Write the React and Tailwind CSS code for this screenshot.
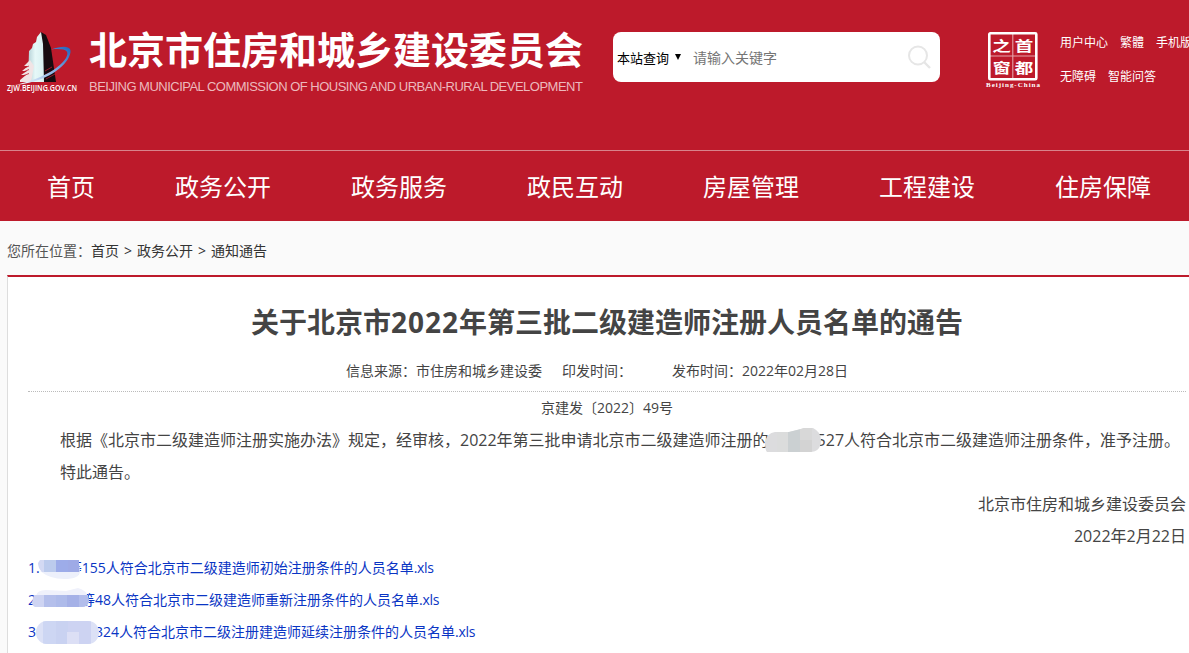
import React, { useState } from 'react';

const navItems = ['首页', '政务公开', '政务服务', '政民互动', '房屋管理', '工程建设', '住房保障'];

const topLinks = [
  ['用户中心', '繁體', '手机版'],
  ['无障碍', '智能问答'],
];

const SiteLogo = () => (
  <svg width="72" height="66" viewBox="0 0 72 66" className="block shrink-0 overflow-visible">
    <defs>
      <linearGradient id="tower" x1="0" y1="0" x2="1" y2="0">
        <stop offset="0" stopColor="#b4d0d6" />
        <stop offset="0.45" stopColor="#e6f8f8" />
        <stop offset="1" stopColor="#d8f0f1" />
      </linearGradient>
      <linearGradient id="orbit" x1="0" y1="1" x2="1" y2="0">
        <stop offset="0" stopColor="#ffffff" />
        <stop offset="0.5" stopColor="#8fb7e6" />
        <stop offset="1" stopColor="#1c62c0" />
      </linearGradient>
    </defs>
    {/* tower */}
    <path d="M34 2 L39 5 L44 18 L49 52 L35 52 Z" fill="#160c10" />
    <path d="M34 2 L30 7 L29 12 L26 14 L25 18 L22 21 L21 52 L37 52 L36 14 Z" fill="url(#tower)" />
    <path d="M23 30 L17 36 L21 36 L15 41 L20 41 L14 45 L19 45 L13 50 L13 52 L24 52 L27 36 Z" fill="#f1e4e5" />
    <path d="M16 38.5 L22 36 M15 42.5 L22 39.5 M14 46.5 L22 43.5" stroke="#bd1a2b" strokeWidth="0.8" />
    <path d="M38 41 L45 37 M38 45 L47 40.5 M39 49 L48 44" stroke="#a31b2a" strokeWidth="0.9" />
    {/* orbit swoosh */}
    <path
      d="M8 55 C26 51 50 42 59 28 C63 21 59 18 44 19.5 C60 14 67 17 62 27 C56 40 34 53 8 55 Z"
      fill="url(#orbit)"
    />
    <text
      x="0"
      y="61.3"
      textLength="70"
      lengthAdjust="spacingAndGlyphs"
      fontSize="8.5"
      fontWeight="600"
      fill="#fff"
      fontFamily="'Open Sans', 'Liberation Sans', sans-serif"
    >
      ZJW.BEIJING.GOV.CN
    </text>
  </svg>
);

const CapitalSeal = () => (
  <svg width="56" height="60" viewBox="0 0 56 60" className="block shrink-0">
    <rect x="4.3" y="3.3" width="47" height="46" rx="1" fill="none" stroke="#fff" strokeWidth="2.6" />
    <path d="M27.8 4 V48 M5 26 H50" stroke="#fff" strokeOpacity="0.6" strokeWidth="1.1" />
    <g
      fill="#fff"
      fontSize="16"
      fontWeight="600"
      textAnchor="middle"
      fontFamily="'Noto Sans CJK SC', sans-serif"
    >
      <text transform="translate(16.6 20.6) scale(1.16 0.86)">之</text>
      <text transform="translate(39 20.6) scale(1.16 0.86)">首</text>
      <text transform="translate(16.6 42.8) scale(1.12 0.86)">窗</text>
      <text transform="translate(39 42.8) scale(1.16 0.86)">都</text>
    </g>
    <text
      x="1"
      y="57"
      textLength="54"
      fontSize="7"
      fontWeight="700"
      fill="#fff"
      fontFamily="'Liberation Serif', serif"
    >
      Beijing-China
    </text>
  </svg>
);

const SearchBox = () => {
  const [keyword, setKeyword] = useState('');

  return (
    <div className="mt-8 ml-[30px] flex h-[50px] w-[327px] shrink-0 items-center rounded-lg bg-white pt-px pl-1">
      <button className="flex w-[76px] items-center text-[13px] leading-5 text-black">
        本站查询
        <svg width="6" height="6" viewBox="0 0 6 6" className="mb-[2px] ml-[6px]">
          <path d="M0 0 H6 L3 6 Z" fill="#000" />
        </svg>
      </button>
      <input
        value={keyword}
        onChange={(e) => setKeyword(e.target.value)}
        placeholder="请输入关键字"
        className="w-[210px] text-sm text-black outline-none placeholder:text-[#757575]"
      />
      <svg width="24" height="24" viewBox="0 0 24 24" fill="none" stroke="#e6e6e6" strokeWidth="2" className="mb-px ml-[4px]">
        <circle cx="11" cy="10.5" r="9" />
        <path d="M17 17 L23 23" strokeWidth="2.4" />
      </svg>
    </div>
  );
};

const Header = () => (
  <header className="bg-[#bd1a2b] text-white">
    <div className="flex h-[150px] items-start">
      <div className="mt-[30px] ml-[7px]">
        <SiteLogo />
      </div>
      <div className="mt-[28px] ml-[10px] w-[494px] shrink-0 whitespace-nowrap">
        <h1 className="h-[44px] text-[38px] leading-[42px] font-bold">北京市住房和城乡建设委员会</h1>
        <p className="mt-[6px] font-['Liberation_Sans',sans-serif] text-[13px] leading-[18px] tracking-[-0.51px] text-[#ecb9bd]">
          BEIJING MUNICIPAL COMMISSION OF HOUSING AND URBAN-RURAL DEVELOPMENT
        </p>
      </div>
      <SearchBox />
      <div className="mt-[30px] ml-[45px]">
        <CapitalSeal />
      </div>
      <div className="mt-[26px] ml-[19px] shrink-0 text-xs leading-[34px] whitespace-nowrap">
        {topLinks.map((row, i) => (
          <div key={i} className="flex gap-3">
            {row.map((label) => (
              <a key={label} href="#">{label}</a>
            ))}
          </div>
        ))}
      </div>
    </div>
    <nav className="flex h-[71px] border-t border-[#d8838b] pl-[7px] text-2xl leading-[72px] whitespace-nowrap">
      {navItems.map((label) => (
        <a key={label} href="#" className="shrink-0 px-10">{label}</a>
      ))}
    </nav>
  </header>
);

// Blurred-out names inside the notice text
const BodyMask = () => (
  <span className="relative inline-block h-4 w-12">
    <svg width="56" height="24" viewBox="0 0 56 24" className="absolute -top-[2px] -left-[4px] max-w-none">
      <clipPath id="mask-body">
        <path d="M10 4 L24 4 L40 0 L48 0 Q56 4 56 12 Q56 24 45 24 L2 24 Q0 22 0 14 Q2 5 10 4 Z" />
      </clipPath>
      <g clipPath="url(#mask-body)">
        <rect width="56" height="24" fill="#dcdcde" />
        <rect x="12" width="11" height="24" fill="#dbdcdc" />
        <rect x="23" width="12" height="24" fill="#cbd0d2" />
        <rect x="35" width="12" height="24" fill="#d3d3d3" />
        <rect x="35" width="12" height="12" fill="#d8d8d8" />
      </g>
    </svg>
  </span>
);

const FirstMask = () => (
  <span className="relative inline-block h-4 w-[28px]">
    <svg width="44" height="20" viewBox="0 0 44 20" className="absolute top-[3px] -left-[2px] max-w-none">
      <path d="M2 11 Q12 19 26 19 Q42 19 42 11 Z" fill="#edf0fb" />
      <path d="M2 0 H40 Q42 6 42 12 H4 Q0 8 0 3 Z" fill="#d3d9f3" />
      <rect x="6" width="12" height="12" fill="#bccbed" />
      <rect x="18" width="12" height="12" fill="#9dace9" />
      <rect x="30" width="11" height="12" fill="#9eaae6" />
    </svg>
  </span>
);

const SecondMask = () => (
  <span className="relative inline-block h-4 w-[45px]">
    <svg width="58" height="20" viewBox="0 0 58 20" className="absolute -top-px -left-[4px] max-w-none">
      <path d="M4 8 Q5 2 14 2 L34 3 L46 0 Q55 2 56 10 Z" fill="#eff1fb" />
      <path d="M2 7 H55 Q57 10 57 14 Q55 19 50 19 H3 Q0 18 0 14 Z" fill="#ced4f2" />
      <rect x="12" y="7" width="12" height="12" fill="#b4bfeb" />
      <rect x="24" y="7" width="11" height="12" fill="#aebbea" />
      <rect x="35" y="7" width="12" height="12" fill="#a5b1e7" />
      <path d="M47 7 H55 Q57 10 57 14 Q55 19 50 19 H47 Z" fill="#b2bdeb" />
    </svg>
  </span>
);

const ThirdMask = () => (
  <span className="relative inline-block h-4 w-[59px]">
    <svg width="64" height="23" viewBox="0 0 64 23" className="absolute top-0 left-0 max-w-none">
      <clipPath id="mask-third">
        <rect width="63" height="23" rx="11" />
      </clipPath>
      <g clipPath="url(#mask-third)">
        <rect width="63" height="23" fill="#dce1f6" />
        <rect x="7" width="13" height="23" fill="#cdd6f3" />
        <rect x="20" width="12" height="23" fill="#c9d2f1" />
        <rect x="32" width="23" height="23" fill="#cdd3f2" />
        <rect x="31" y="11" width="12" height="12" fill="#dcdff5" />
      </g>
    </svg>
  </span>
);

const attachments = [
  { no: '1.', Mask: FirstMask, text: '等155人符合北京市二级建造师初始注册条件的人员名单' },
  { no: '2', Mask: SecondMask, text: '等48人符合北京市二级建造师重新注册条件的人员名单' },
  { no: '3', Mask: ThirdMask, text: '324人符合北京市二级注册建造师延续注册条件的人员名单' },
];

const Article = () => (
  <main className="ml-[7px] h-[378px] border-t-2 border-l border-t-[#bd1a2b] border-l-[#dddddd] bg-white pr-[3px] pl-5 text-[#444444]">
    <h2 className="h-[74px] pt-[24px] text-center text-[28px] leading-[42px] font-bold whitespace-nowrap">
      关于北京市<span className="tracking-[1px]">2022</span>年第三批二级建造师注册人员名单的通告
    </h2>
    <div className="flex h-[41px] justify-center border-b border-dotted border-[#bbbbbb] pr-5 text-sm leading-10 whitespace-nowrap">
      <span className="mr-5">信息来源：市住房和城乡建设委</span>
      <span className="mr-10">印发时间：</span>
      <span>发布时间：2022年02月28日</span>
    </div>
    <p className="text-center text-sm leading-8">京建发〔2022〕49号</p>
    <div className="text-base leading-8 whitespace-nowrap">
      <p className="h-8 pl-8">
        根据《北京市二级建造师注册实施办法》规定，经审核，2022年第三批申请北京市二级建造师注册的
        <BodyMask />
        527人符合北京市二级建造师注册条件，准予注册。
      </p>
      <p className="h-8 pl-8">特此通告。</p>
      <p className="h-8 text-right">北京市住房和城乡建设委员会</p>
      <p className="h-8 text-right">2022年2月22日</p>
    </div>
    <ul className="text-sm leading-8 whitespace-nowrap text-[#0a35c4]">
      {attachments.map(({ no, Mask, text }) => (
        <li key={no} className="h-8">
          <a href="#">{no}<Mask />{text}<span className="tracking-[-0.3px]">.xls</span></a>
        </li>
      ))}
    </ul>
  </main>
);

const App = () => (
  <div className="h-[653px] w-full overflow-hidden bg-[#fafafa] font-['Open_Sans','Noto_Sans_CJK_SC',sans-serif]">
    <Header />
    <div className="flex h-[54px] items-center gap-[5px] pt-[6px] pl-[7px] text-sm text-[#333333]">
      <span className="-mr-[5px] text-[#555555]">您所在位置：</span>
      <a href="#">首页</a>
      <span>&gt;</span>
      <a href="#">政务公开</a>
      <span>&gt;</span>
      <a href="#">通知通告</a>
    </div>
    <Article />
  </div>
);

export default App;
